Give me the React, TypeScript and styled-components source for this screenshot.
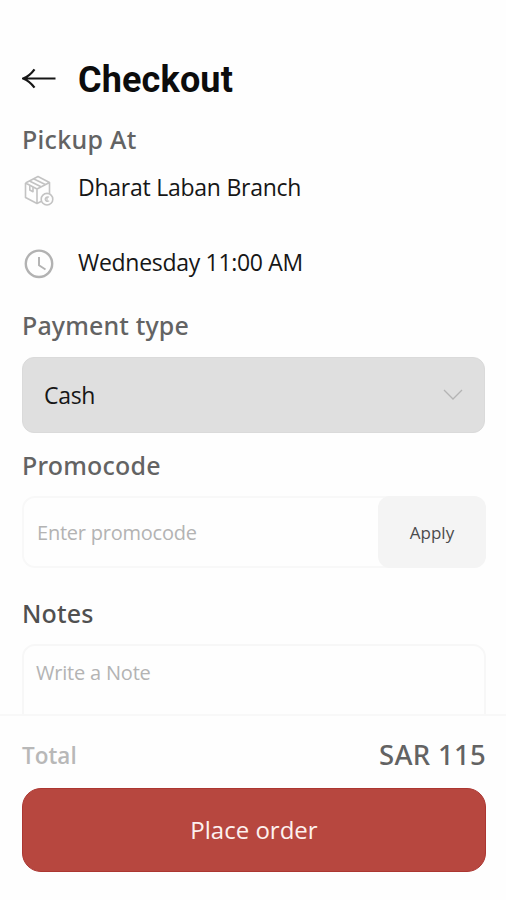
import React from 'react';
import styled, { createGlobalStyle } from 'styled-components';

const GlobalStyle = createGlobalStyle`
  *, *::before, *::after { box-sizing: border-box; }
  body { margin: 0; background: #fefefe; }
  button, input, textarea { font: inherit; letter-spacing: inherit; }
`;

const Screen = styled.div`
  display: flex;
  flex-direction: column;
  height: 900px;
  overflow: hidden;
  background: #fefefe;
  color: #161616;
  font-family: 'Open Sans', 'Noto Sans', sans-serif;
`;

const Content = styled.main`
  flex: 1;
  min-height: 0;
  overflow: hidden;
  padding: 56px 20px 0 22px;
`;

const Header = styled.header`
  display: flex;
  align-items: center;
  height: 46px;
`;

const BackButton = styled.button`
  display: flex;
  width: 56px;
  padding: 0;
  border: 0;
  background: none;
`;

const Title = styled.h1`
  margin: 0;
  padding-top: 1px;
  font: 700 36px/46px Roboto, sans-serif;
  letter-spacing: 0.15px;
  color: #0c0c0c;
`;

const Heading = styled.h2<{ $top: number; $dark?: boolean; $spacing?: number }>`
  height: 32px;
  margin: ${(p) => p.$top}px 0 0;
  font-family: 'Noto Sans', sans-serif;
  font-size: 25px;
  font-weight: 500;
  line-height: 32px;
  letter-spacing: ${(p) => p.$spacing ?? 0.15}px;
  color: ${(p) => (p.$dark ? '#505050' : '#636363')};
`;

const DetailRow = styled.div<{ $top: number; $spacing: number }>`
  display: flex;
  align-items: flex-start;
  height: 33px;
  margin-top: ${(p) => p.$top}px;
  padding-top: 1px;
  font-size: 23px;
  line-height: 33px;
  letter-spacing: ${(p) => p.$spacing}px;
`;

const DetailIcon = styled.span`
  display: flex;
  width: 56px;
  padding-top: 2px;
`;

const Select = styled.div`
  display: flex;
  align-items: center;
  justify-content: space-between;
  height: 76px;
  margin: 16px 1px 0 0;
  padding: 0 21px;
  border: 1px solid #dadada;
  border-radius: 12px;
  background: #dfdfdf;
  font-size: 23px;
  line-height: 32px;
  letter-spacing: -0.3px;
`;

const PromoField = styled.div`
  display: flex;
  height: 72px;
  margin-top: 15px;
  border-radius: 13px;
  background: #fefefe;
  box-shadow: inset 0 0 0 2px #f8f8f8;
`;

const PromoInput = styled.input`
  flex: 1;
  min-width: 0;
  padding: 0 0 0 15px;
  border: 0;
  outline: 0;
  background: none;
  font-size: 20px;
  letter-spacing: -0.23px;
  &::placeholder { color: #b3b3b3; opacity: 1; }
`;

const ApplyButton = styled.button`
  width: 108px;
  padding: 0;
  border: 0;
  border-radius: 12px;
  background: #f4f4f4;
  color: #4b4b4b;
  font-size: 17px;
`;

const NoteInput = styled.textarea`
  display: block;
  width: 100%;
  height: 120px;
  margin-top: 15px;
  padding: 13px 12px;
  border: 2px solid #f7f7f7;
  border-radius: 13px;
  outline: 0;
  background: none;
  resize: none;
  font-size: 20px;
  line-height: 28px;
  letter-spacing: -0.2px;
  &::placeholder { color: #b3b3b3; opacity: 1; }
`;

const Footer = styled.footer`
  height: 186px;
  padding: 22px 20px 0 22px;
  border-top: 2px solid #f8f8f8;
`;

const TotalRow = styled.div`
  display: flex;
  justify-content: space-between;
  height: 34px;
  line-height: 34px;
`;

const TotalLabel = styled.span`
  padding-top: 1px;
  font-size: 22.5px;
  font-weight: 600;
  color: #b8b8b8;
`;

const TotalAmount = styled.span`
  font-family: 'Noto Sans', sans-serif;
  font-size: 27.5px;
  font-weight: 500;
  letter-spacing: 0.3px;
  color: #636363;
`;

const PlaceOrder = styled.button`
  display: block;
  width: 464px;
  height: 84px;
  margin-top: 16px;
  padding: 0 0 2px;
  border: 1px solid #ac3631;
  border-radius: 19px;
  background: #b7473f;
  color: #fdf1ef;
  font-size: 24px;
`;

const BackArrow = () => (
  <svg width="34" height="22" viewBox="0 0 34 22" fill="none" stroke="#161616" strokeWidth="2.2">
    <path d="M33.500 10.500H1.500M12.500 1.300C9.500 5.500 6 8.500 1.200 10.500C6 12.500 9.500 15.500 12.500 19.700" />
  </svg>
);

const PackageIcon = () => (
  <svg width="34" height="34" viewBox="0 0 34 34" fill="none" stroke="#c3c3c3" strokeWidth="1.600" strokeLinejoin="round">
    <path d="M3.500 10L16 3.500L27.500 9.500V21M3.500 10L15 16L27.500 9.500M3.500 10V24.500L15 30.500L20 28M15 16V30.500" />
    <path d="M7.500 8L19 13.800M11.500 5.800L23.300 11.500M7.800 12.500V17L11 18.700V14" />
    <circle cx="25" cy="26.200" r="5.800" fill="#fefefe" />
    <path d="M27 24.200C24.800 23.200 23 24.700 23.200 26.500C23.500 28.500 25.500 28.900 27.200 27.800M25 24V28.500" strokeWidth="1.300" />
  </svg>
);

const ClockIcon = () => (
  <svg width="34" height="34" viewBox="0 0 34 34" fill="none" stroke="#b2b2b2">
    <circle cx="17" cy="15.800" r="13.200" strokeWidth="2.400" />
    <path d="M17 9V17.300L23.500 21.500" strokeWidth="1.900" />
  </svg>
);

const Chevron = () => (
  <svg width="20" height="12" viewBox="0 0 20 12" fill="none" stroke="#b4b4b4" strokeWidth="1.300">
    <path d="M1 1L10 10L19 1" />
  </svg>
);

export default function App() {
  return (
    <Screen>
      <GlobalStyle />
      <Content>
        <Header>
          <BackButton aria-label="Back"><BackArrow /></BackButton>
          <Title>Checkout</Title>
        </Header>
        <Heading $top={21} $spacing={0.3}>Pickup At</Heading>
        <DetailRow $top={15} $spacing={-0.25}>
          <DetailIcon><PackageIcon /></DetailIcon>
          Dharat Laban Branch
        </DetailRow>
        <DetailRow $top={42} $spacing={-0.3}>
          <DetailIcon><ClockIcon /></DetailIcon>
          Wednesday 11:00 AM
        </DetailRow>
        <Heading $top={31}>Payment type</Heading>
        <Select>
          <span>Cash</span>
          <Chevron />
        </Select>
        <Heading $top={16} $spacing={0.2}>Promocode</Heading>
        <PromoField>
          <PromoInput placeholder="Enter promocode" />
          <ApplyButton>Apply</ApplyButton>
        </PromoField>
        <Heading $top={29} $dark>Notes</Heading>
        <NoteInput placeholder="Write a Note" />
      </Content>
      <Footer>
        <TotalRow>
          <TotalLabel>Total</TotalLabel>
          <TotalAmount>SAR 115</TotalAmount>
        </TotalRow>
        <PlaceOrder>Place order</PlaceOrder>
      </Footer>
    </Screen>
  );
}
